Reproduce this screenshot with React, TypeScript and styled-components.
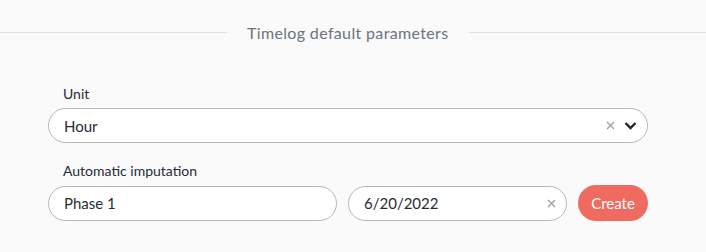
import React from 'react';
import styled, { createGlobalStyle } from 'styled-components';

const GlobalStyle = createGlobalStyle`
  html, body {
    margin: 0;
    padding: 0;
    background: #fafafa;
  }
  body {
    font-family: Lato, "Noto Sans", sans-serif;
    color: #262b36;
  }
`;

const Page = styled.div`
  width: 706px;
  height: 252px;
  background: #fafafa;
  box-sizing: border-box;
  padding-top: 22px;
`;

const Divider = styled.div`
  display: flex;
  align-items: center;
  gap: 20px;
  height: 20px;
`;

const Line = styled.div<{ $width?: number }>`
  height: 1px;
  background: #e2e2e2;
  ${({ $width }) => ($width ? `width: ${$width}px;` : 'flex: 1;')}
`;

const Title = styled.span`
  font-family: Lato, "Noto Sans", sans-serif;
  font-size: 16px;
  letter-spacing: 0.35px;
  color: #6b7383;
  white-space: nowrap;
`;

const Form = styled.div`
  padding: 0 58px 0 48px;
  margin-top: 43px;
  display: flex;
  flex-direction: column;
  gap: 19px;
`;

const Label = styled.label`
  display: block;
  font-size: 14px;
  padding-left: 15px;
  line-height: 18px;
  margin-bottom: 5px;
  color: #262b36;
`;

const Field = styled.div<{ $grow?: number; $width?: number }>`
  box-sizing: border-box;
  height: 35px;
  border: 1px solid #b7b7b7;
  border-radius: 18px;
  background: #fff;
  display: flex;
  align-items: center;
  padding: 0 10px 0 15px;
  font-size: 15px;
  color: #262b36;
  ${({ $grow }) => ($grow ? `flex: ${$grow};` : '')}
  ${({ $width }) => ($width ? `width: ${$width}px; flex: none;` : '')}
`;

const Value = styled.span`
  flex: 1;
`;

const Icons = styled.span`
  display: flex;
  align-items: center;
  gap: 9px;
`;

const Row = styled.div`
  display: flex;
  align-items: center;
  gap: 11px;
`;

const Group = styled.div``;

const Button = styled.button`
  height: 36px;
  width: 70px;
  flex: none;
  border: none;
  border-radius: 18px;
  background: #ef6b5f;
  color: #fff;
  font-family: Lato, "Noto Sans", sans-serif;
  font-size: 15px;
  padding: 0;
`;

const ClearIcon = () => (
  <svg width="9" height="9" viewBox="0 0 9 9">
    <path d="M1 1 L8 8 M8 1 L1 8" stroke="#9aa0a6" strokeWidth="1.3" />
  </svg>
);

const ChevronIcon = () => (
  <svg width="13" height="9" viewBox="0 0 13 9">
    <path d="M1.5 2 L6.5 7 L11.5 2" stroke="#23232b" strokeWidth="2.4" fill="none" />
  </svg>
);

export default function App() {
  return (
    <>
      <GlobalStyle />
      <Page>
        <Divider>
          <Line $width={227} />
          <Title>Timelog default parameters</Title>
          <Line />
        </Divider>
        <Form>
          <Group>
            <Label>Unit</Label>
            <Field>
              <Value>Hour</Value>
              <Icons>
                <ClearIcon />
                <ChevronIcon />
              </Icons>
            </Field>
          </Group>
          <Group>
            <Label>Automatic imputation</Label>
            <Row>
              <Field $grow={1}>
                <Value>Phase 1</Value>
              </Field>
              <Field $width={219}>
                <Value>6/20/2022</Value>
                <Icons>
                  <ClearIcon />
                </Icons>
              </Field>
              <Button>Create</Button>
            </Row>
          </Group>
        </Form>
      </Page>
    </>
  );
}
